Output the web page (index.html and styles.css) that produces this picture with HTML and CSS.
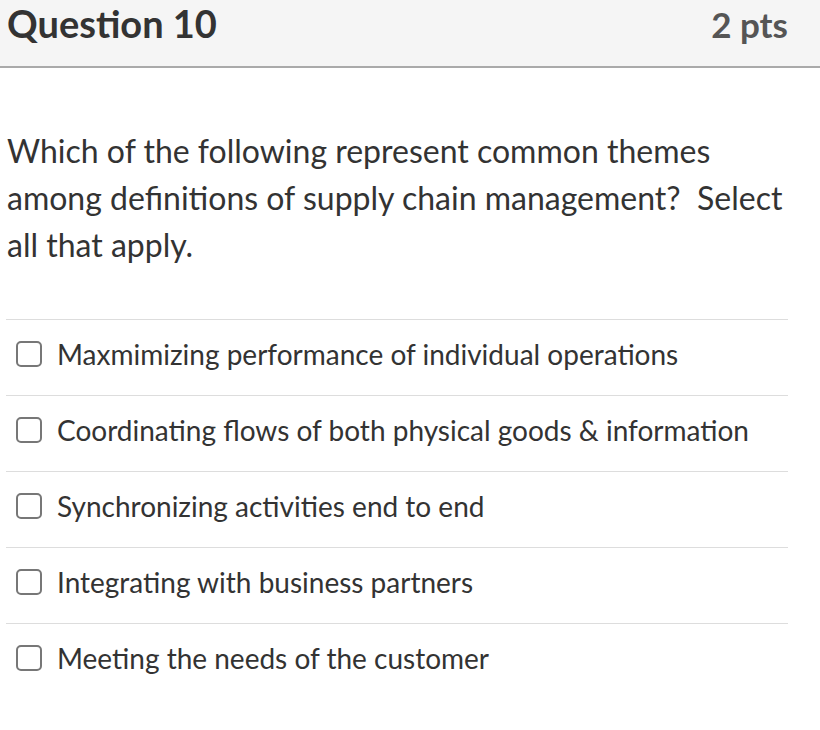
FILE: index.html
```html
<!DOCTYPE html>
<html>
<head>
<meta charset="utf-8">
<link rel="stylesheet" href="styles.css">
</head>
<body>
<div class="header">
  <span class="title">Question 10</span>
  <span class="pts">2 pts</span>
</div>
<div class="question">Which of the following represent common themes among definitions of supply chain management?&nbsp; Select all that apply.</div>
<div class="answers">
  <div class="answer"><span class="box"></span><span class="label">Maxmimizing performance of individual operations</span></div>
  <div class="answer"><span class="box"></span><span class="label">Coordinating flows of both physical goods &amp; information</span></div>
  <div class="answer"><span class="box"></span><span class="label">Synchronizing activities end to end</span></div>
  <div class="answer"><span class="box"></span><span class="label">Integrating with business partners</span></div>
  <div class="answer"><span class="box"></span><span class="label">Meeting the needs of the customer</span></div>
</div>
</body>
</html>
```
FILE: styles.css
```css
body {
  margin: 0;
  font-family: Lato, "Open Sans", sans-serif;
  color: #333;
  background: #fff;
}
.header {
  height: 66px;
  background: #f5f5f5;
  border-bottom: 2px solid #aaa;
  display: flex;
  justify-content: space-between;
  align-items: flex-start;
  padding: 0 32px 0 7px;
  box-sizing: content-box;
}
.title {
  font-size: 38px;
  font-weight: bold;
  line-height: 46px;
  color: #333;
}
.pts {
  font-size: 35px;
  font-weight: bold;
  line-height: 48px;
  color: #555;
}
.question {
  font-size: 32px;
  line-height: 47px;
  padding: 59px 20px 0 7px;
  width: 810px;
  box-sizing: border-box;
}
.answers {
  margin: 51px 32px 0 6px;
}
.answer {
  border-top: 1px solid #ddd;
  display: flex;
  align-items: center;
  padding-left: 10px;
  padding-bottom: 7px;
  box-sizing: border-box;
  height: 76px;
}
.box {
  width: 22px;
  height: 22px;
  border: 2px solid #777;
  border-radius: 5px;
  flex: none;
}
.label {
  font-size: 28px;
  margin-left: 15px;
}
```
